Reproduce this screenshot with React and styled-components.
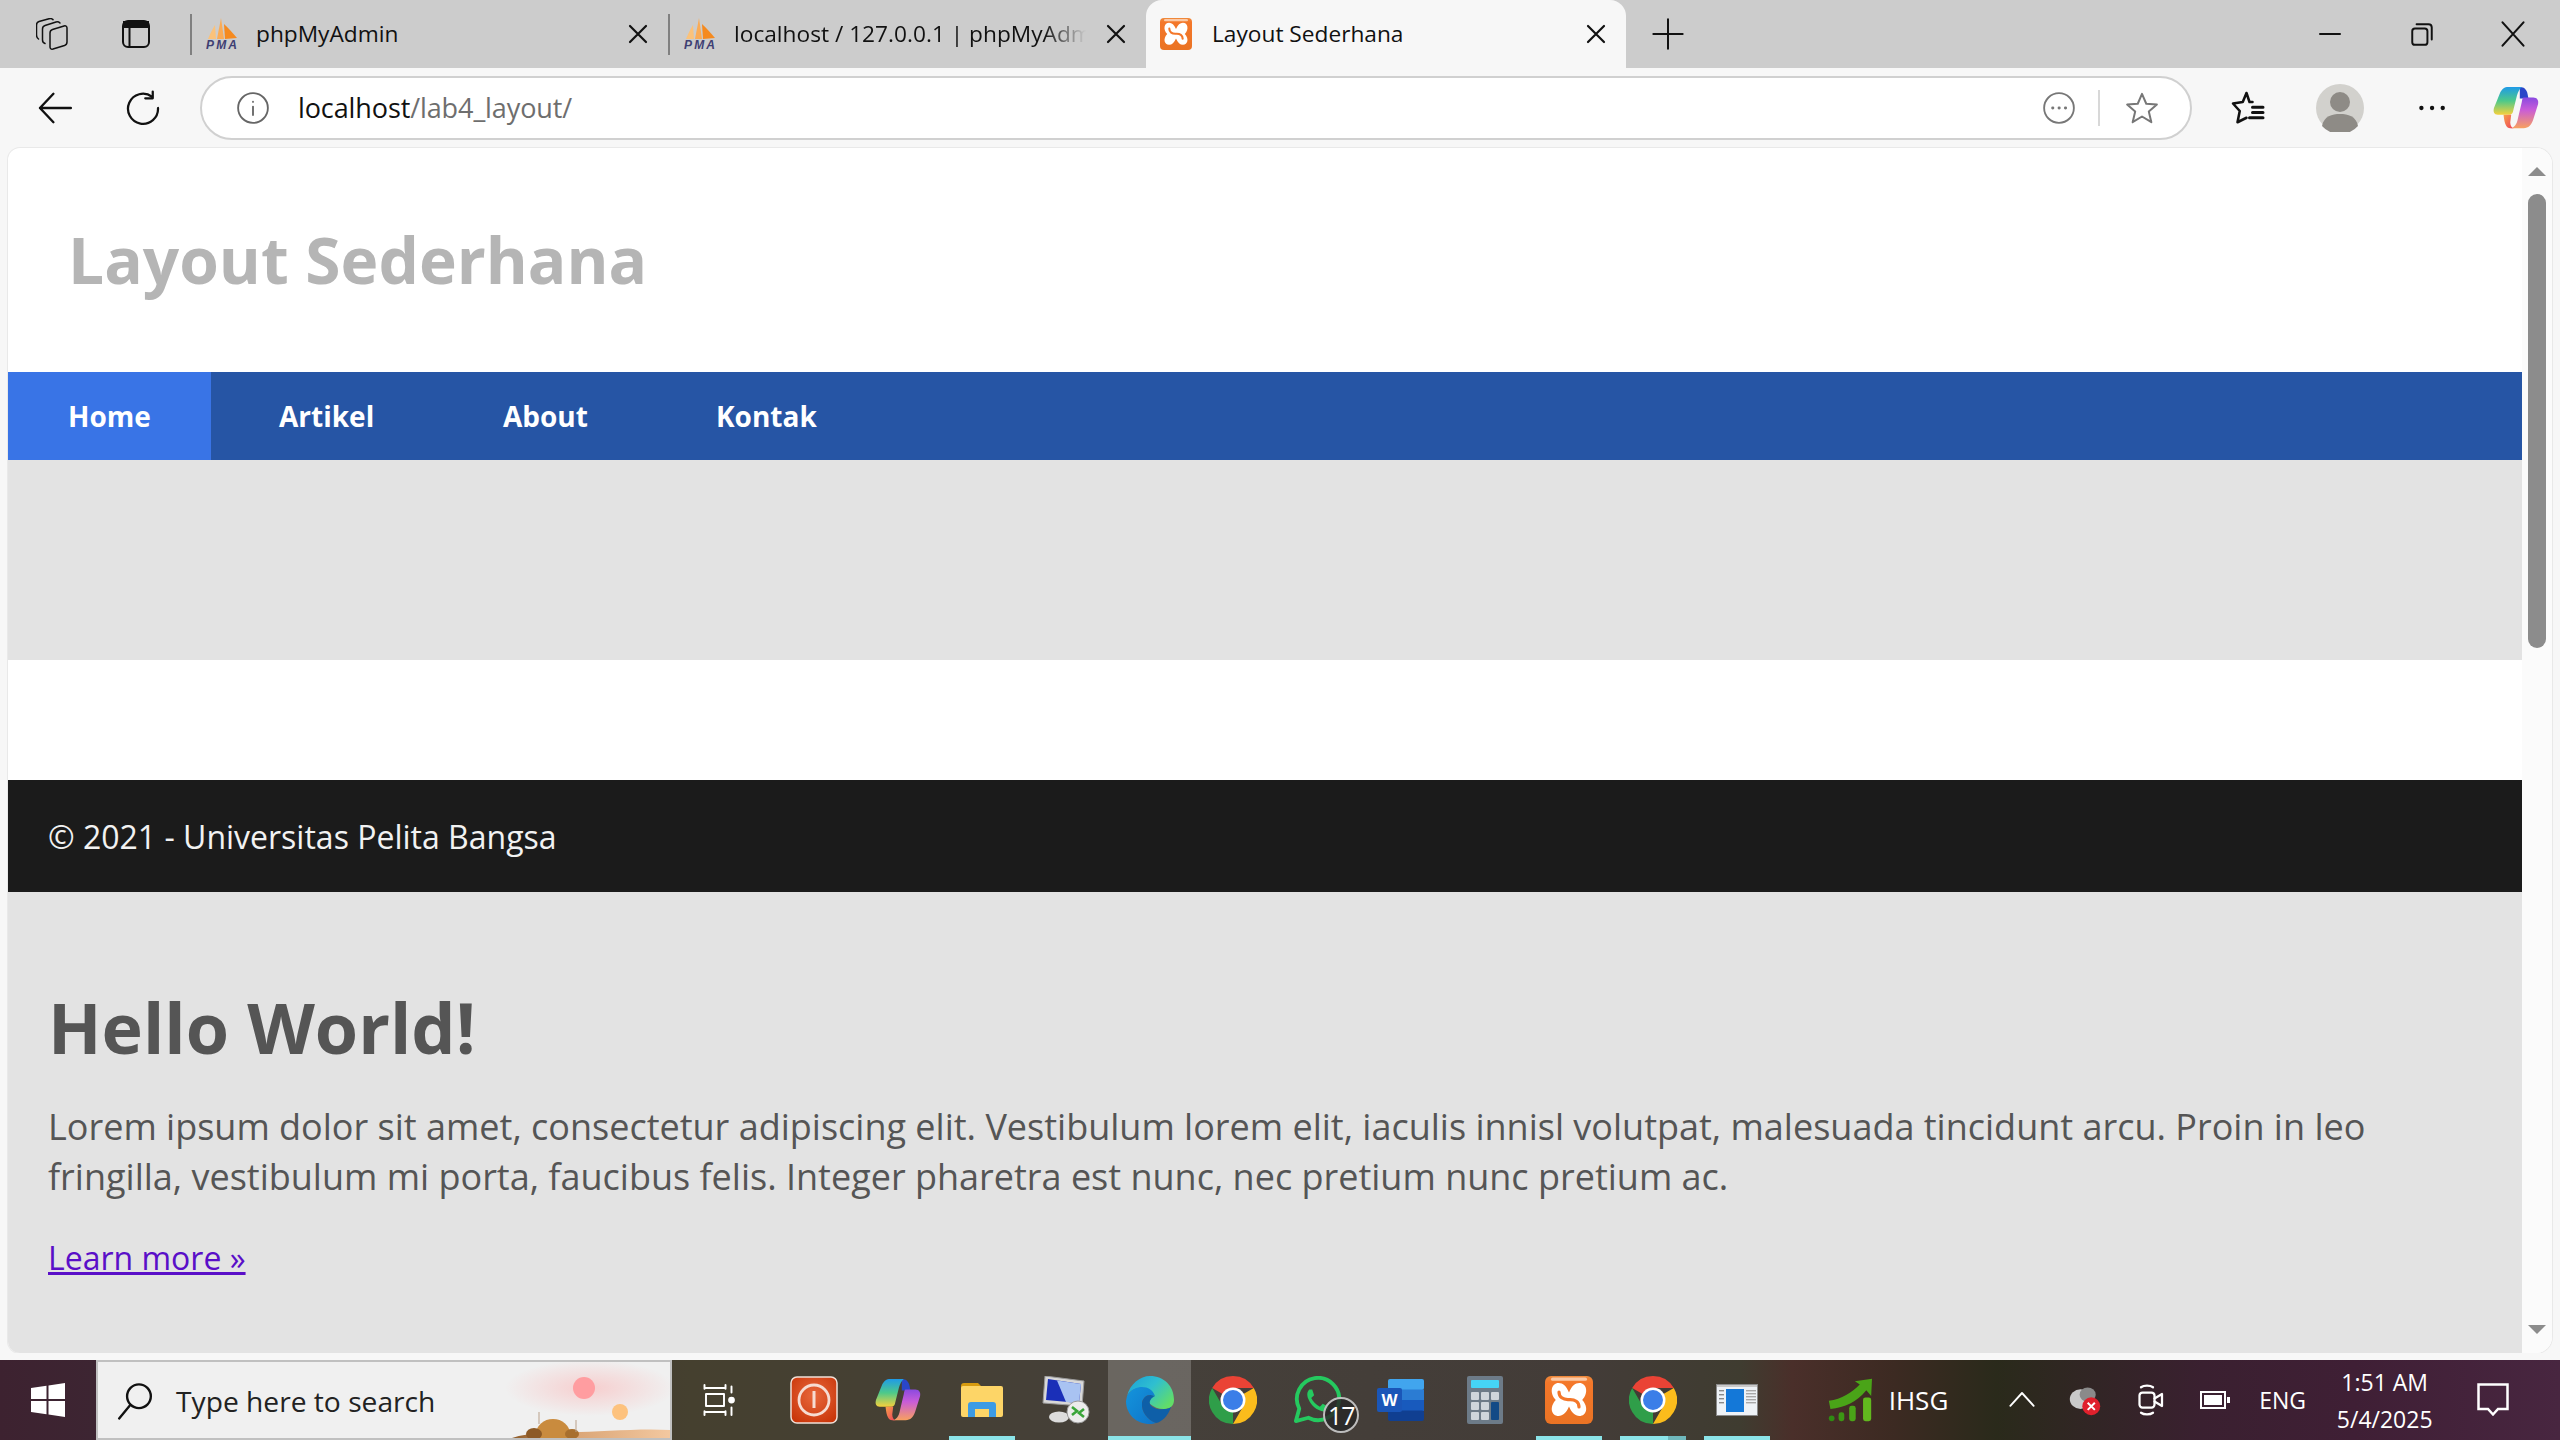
import React from 'react'
import styled, { createGlobalStyle } from 'styled-components'

const Global = createGlobalStyle`
  html, body { margin: 0; padding: 0; background: #f7f7f7; overflow: hidden; }
  * { box-sizing: border-box; }
`

const Screen = styled.div`
  width: 2560px;
  height: 1440px;
  display: flex;
  flex-direction: column;
  overflow: hidden;
  font-family: "Open Sans", "Noto Sans", sans-serif;
  background: #f7f7f7;
`

/* browser chrome */
const TabStrip = styled.div`
  height: 68px;
  flex: none;
  display: flex;
  background: #cccccc;
  color: #111;
`
const StripButton = styled.div`
  width: ${p => p.$w || 84}px;
  height: 68px;
  flex: none;
  display: flex;
  align-items: center;
  justify-content: center;
  margin-right: ${p => p.$mr || 0}px;
`
const Tab = styled.div`
  width: ${p => (p.$active ? 480 : 478)}px;
  height: 68px;
  flex: none;
  display: flex;
  align-items: center;
  gap: ${p => (p.$active ? 20 : 18)}px;
  padding: 0 18px 0 14px;
  font-size: 22.7px;
  border-left: ${p => (p.$active ? 'none' : '2px solid #808080')};
  border-image: ${p => (p.$active ? 'none' : 'linear-gradient(#ccc 22%, #808080 22%, #808080 80%, #ccc 80%) 1')};
  background: ${p => (p.$active ? '#f7f7f7' : 'transparent')};
  border-radius: ${p => (p.$active ? '16px 16px 0 0' : '0')};
`
const TabTitle = styled.span`
  flex: 1;
  min-width: 0;
  white-space: nowrap;
  overflow: hidden;
  padding-bottom: 1px;
  mask-image: ${p => (p.$fade ? 'linear-gradient(90deg, #000 88%, transparent)' : 'none')};
`
const WindowButtons = styled.div`
  margin-left: auto;
  display: flex;
  padding-right: 2px;
`
const Toolbar = styled.div`
  height: 80px;
  flex: none;
  display: flex;
  align-items: center;
  background: #f7f7f7;
  padding-left: 11px;
`
const ToolButton = styled.div`
  width: ${p => p.$w || 88}px;
  height: 64px;
  flex: none;
  display: flex;
  align-items: center;
  justify-content: center;
`
const AddressBar = styled.div`
  width: 1992px;
  height: 64px;
  flex: none;
  margin-left: 13px;
  display: flex;
  align-items: center;
  background: #fff;
  border: 2px solid #d0d0d0;
  border-radius: 32px;
  padding-left: 34px;
  margin-right: 14px;
`
const Url = styled.div`
  margin-left: 28px;
  flex: 1;
  font-size: 27px;
  color: #111;
  letter-spacing: -0.1px;
  padding-bottom: 2px;
`
const UrlPath = styled.span`
  color: #6e6e6e;
`
const AddressDivider = styled.div`
  width: 2px;
  height: 36px;
  background: #d8d8d8;
  margin: 0 25px 0 22px;
`

/* page viewport */
const Viewport = styled.div`
  margin: 0 8px;
  height: 1205px;
  flex: none;
  display: flex;
  background: #fff;
  border-radius: 12px 16px 16px 12px;
  overflow: hidden;
  box-shadow: 0 0 0 1px #e9e9e9;
`
const PageColumn = styled.div`
  width: 2514px;
  flex: none;
  display: flex;
  flex-direction: column;
`
const Header = styled.header`
  height: 224px;
  flex: none;
  padding: 0 60px;
  display: flex;
  align-items: center;
`
const SiteTitle = styled.h1`
  margin: 0;
  font-size: 64px;
  font-weight: 700;
  color: #b5b5b5;
  line-height: 1;
`
const Nav = styled.nav`
  height: 88px;
  flex: none;
  display: flex;
  gap: 8px;
  background: #2655a5;
`
const NavLink = styled.a`
  width: ${p => p.$w}px;
  padding-left: 60px;
  display: flex;
  align-items: center;
  color: #fff;
  font-size: 28px;
  font-weight: 700;
  background: ${p => (p.$active ? '#3974e6' : 'transparent')};
`
const Banner = styled.div`
  height: 200px;
  flex: none;
  background: #e3e3e3;
`
const Spacer = styled.div`
  height: 120px;
  flex: none;
`
const Footer = styled.footer`
  height: 112px;
  flex: none;
  display: flex;
  align-items: center;
  padding: 0 40px;
  background: #1b1b1b;
  color: #f2f2f2;
  font-size: 32px;
`
const Hero = styled.section`
  flex: 1;
  background: #e3e3e3;
  padding: 89px 40px 0;
  color: #555;
`
const HeroTitle = styled.h2`
  margin: 0 0 29px;
  font-size: 70px;
  font-weight: 700;
  line-height: 92px;
  color: #555;
`
const HeroText = styled.p`
  margin: 0 0 31px;
  font-size: 36px;
  line-height: 50px;
`
const LearnMore = styled.a`
  font-size: 32px;
  line-height: 50px;
  color: #5a0fc8;
  text-decoration: underline;
`
const ScrollTrack = styled.div`
  flex: 1;
  background: #fbfbfb;
  display: flex;
  flex-direction: column;
  align-items: center;
  padding-top: 19px;
`
const ArrowUp = styled.div`
  width: 0;
  height: 0;
  border-left: 9px solid transparent;
  border-right: 9px solid transparent;
  border-bottom: 9px solid #8c8c8c;
`
const ArrowDown = styled(ArrowUp)`
  border-bottom: none;
  border-top: 9px solid #8c8c8c;
  margin-top: auto;
  margin-bottom: 19px;
`
const Thumb = styled.div`
  width: 18px;
  height: 454px;
  margin-top: 18px;
  background: #8c8c8c;
  border-radius: 9px;
`
const BottomGap = styled.div`
  height: 7px;
  flex: none;
  background: #f7f7f7;
`

/* taskbar */
const Taskbar = styled.div`
  height: 80px;
  flex: none;
  display: flex;
  align-items: stretch;
  color: #fff;
  background: linear-gradient(90deg, #3d2230 0%, #3d2532 3.7%, #45402f 27%, #45403a 45%, #433c38 62%, #3f3c30 68%, #4a2f2a 70%, #3c2a22 74%, #2a2a1b 78%, #3a2030 86%, #3f1f35 92%, #482640 100%);
`
const StartButton = styled.div`
  width: 96px;
  flex: none;
  display: flex;
  align-items: center;
  justify-content: center;
`
const SearchBox = styled.div`
  width: 576px;
  flex: none;
  display: flex;
  align-items: center;
  gap: 22px;
  padding: 2px 0 0 18px;
  background: #f0f0f0;
  border: 2px solid #c0c0c0;
  color: #222;
  font-size: 28.2px;
  position: relative;
  overflow: hidden;
`
const SearchArt = styled.svg`
  position: absolute;
  right: 0;
  top: 0;
`
const TaskSlot = styled.div`
  width: ${p => p.$w || 83.9}px;
  flex: none;
  display: flex;
  align-items: center;
  justify-content: center;
  position: relative;
  background: ${p => (p.$active ? 'rgba(255,255,255,.2)' : 'transparent')};
  &::after {
    content: '';
    display: ${p => (p.$open ? 'block' : 'none')};
    position: absolute;
    bottom: 0;
    left: ${p => (p.$active ? 0 : '9px')};
    right: ${p => (p.$active ? 0 : '9px')};
    height: 4px;
    background: ${p => (p.$stacked ? 'linear-gradient(90deg, #8be4e8 73%, #6fb8bc 73%)' : '#8be4e8')};
  }
`
const TaskView = styled(TaskSlot)`
  padding-right: 8px;
`
const CountBadge = styled.span`
  position: absolute;
  right: 0;
  bottom: 7px;
  width: 36px;
  height: 36px;
  border-radius: 50%;
  border: 2px solid #bdbdbd;
  background: rgba(40, 40, 40, .85);
  display: flex;
  align-items: center;
  justify-content: center;
  font-size: 25px;
  letter-spacing: -1px;
`
const Ticker = styled.div`
  margin-left: 48px;
  width: 163px;
  flex: none;
  display: flex;
  align-items: center;
  gap: 16px;
  font-size: 26px;
`
const Tray = styled.div`
  flex: 1;
  display: flex;
  align-items: center;
  font-size: 23px;
`
const TrayIcon = styled.div`
  width: ${p => p.$w || 62}px;
  flex: none;
  display: flex;
  align-items: center;
  justify-content: center;
`
const Clock = styled.div`
  width: 130px;
  flex: none;
  display: flex;
  flex-direction: column;
  align-items: center;
  gap: 7px;
  font-size: 23px;
  line-height: 30px;
`

/* drawings */
const Line = ({ w = 32, vb = 24, sw = 1.6, stroke = '#111', children }) => (
  <svg width={w} height={w} viewBox={`0 0 ${vb} ${vb}`} fill="none" stroke={stroke} strokeWidth={sw} strokeLinecap="round" strokeLinejoin="round" style={{ flex: 'none' }}>
    {children}
  </svg>
)

const PmaIcon = () => (
  <svg width="32" height="32" viewBox="0 0 32 32" style={{ flex: 'none' }}>
    <path d="M2 21 C5 14 7 10 9 7 L10 21Z" fill="#fbc27a" />
    <path d="M11 21 L15 0 L18 21Z" fill="#fbab55" />
    <path d="M19 21 L18 6 C23 11 27 15 31 20Z" fill="#f58a1f" />
    <text x="0" y="31" fontSize="12" fontWeight="700" fontStyle="italic" fill="#3f3f73" fontFamily="Liberation Sans" textLength="31">PMA</text>
  </svg>
)

const XamppMark = ({ s = 32, id }) => (
  <svg width={s} height={s} viewBox="0 0 24 24" style={{ flex: 'none' }}>
    <defs>
      <linearGradient id={id} x1="0" y1="0" x2="0" y2="1">
        <stop offset="0" stopColor="#ef8a3c" />
        <stop offset="0.14" stopColor="#f4772a" />
        <stop offset="1" stopColor="#ea7324" />
      </linearGradient>
    </defs>
    <rect width="24" height="24" rx="3" fill={`url(#${id})`} />
    <rect x="3" y="0.8" width="18" height="1.6" rx="0.8" fill="#fbc9a6" />
    <path d="M12 8.2 C10.6 5 9 3.5 6.8 3.5 C3.2 3.5 2 8.4 5.4 12 C2 15.6 3.2 20 6.8 20 C9 20 10.6 18.5 12 15.3 C13.4 18.5 15 20 17.2 20 C20.8 20 22 15.6 18.6 12 C22 8.4 20.8 3.5 17.2 3.5 C15 3.5 13.4 5 12 8.2Z" fill="#fff" />
    <path d="M7 8 C7 10.5 9 12 12 11.8 C15 11.6 17 13 17 15.5" fill="none" stroke="#f4772a" strokeWidth="1.6" strokeLinecap="round" />
  </svg>
)

const ChromeIcon = () => (
  <svg width="48" height="48" viewBox="0 0 48 48">
    <path d="M24 0 A24 24 0 0 1 44.8 12 L24 12 A12 12 0 0 0 13.6 18 L3.2 12 A24 24 0 0 1 24 0Z" fill="#ea4335" />
    <path d="M44.8 12 A24 24 0 0 1 24 48 L34.4 30 A12 12 0 0 0 34.4 18 Z" fill="#fbbc1c" />
    <path d="M3.2 12 L13.6 30 A12 12 0 0 0 24 36 L24 48 A24 24 0 0 1 3.2 12Z" fill="#2f9e49" />
    <circle cx="24" cy="24" r="12.5" fill="#fff" />
    <circle cx="24" cy="24" r="10" fill="#3b7ee8" />
  </svg>
)

const EdgeIcon = () => (
  <svg width="48" height="48" viewBox="0 0 48 48">
    <defs>
      <linearGradient id="edgeTop" x1="0" y1="0" x2="1" y2="0.7">
        <stop offset="0" stopColor="#1a9fd8" />
        <stop offset="0.5" stopColor="#2fbfd0" />
        <stop offset="1" stopColor="#62dd68" />
      </linearGradient>
      <linearGradient id="edgeMid" x1="0" y1="0" x2="1" y2="1">
        <stop offset="0" stopColor="#1494dc" />
        <stop offset="1" stopColor="#0f74c8" />
      </linearGradient>
    </defs>
    <path d="M1 20 C4 8 14 0 24 0 C38 0 48 10 48 24 C48 30 44 33 38 33 C32 33 28 31 24 28 C22 26 24 24 26 21 C24 16 20 12 14 12 C8 12 3 16 1 20Z" fill="url(#edgeTop)" />
    <path d="M1 20 C5 13 11 11 16 11 C22 11 27 14 29 20 C22 17 17 21 16 27 C15 36 22 44 30 47 C27.5 47.8 26 48 24 48 C10 48 0 38 0 25Z" fill="url(#edgeMid)" />
    <path d="M16 27 C17 21 22 17 29 20 C25 22 23 25 24 28 C26 32 32 34 38 33 C41 33 43 32.5 45 31 C42 40 36 46 30 47 C22 44 15 36 16 27Z" fill="#0e5fa8" />
  </svg>
)

const CopilotIcon = ({ s = 46, id }) => (
  <svg width={s} height={s} viewBox="0 0 48 46">
    <defs>
      <linearGradient id={`${id}a`} x1="0" y1="0" x2="0" y2="1">
        <stop offset="0" stopColor="#1e9ae8" />
        <stop offset="0.5" stopColor="#4dc98a" />
        <stop offset="1" stopColor="#f5d13c" />
      </linearGradient>
      <linearGradient id={`${id}b`} x1="0" y1="0" x2="0" y2="1">
        <stop offset="0" stopColor="#8a4ae0" />
        <stop offset="0.4" stopColor="#c85cd8" />
        <stop offset="1" stopColor="#f8a060" />
      </linearGradient>
      <linearGradient id={`${id}c`} x1="0" y1="0" x2="1" y2="1">
        <stop offset="0" stopColor="#f7a04a" />
        <stop offset="1" stopColor="#ee3f5a" />
      </linearGradient>
    </defs>
    <path d="M28 1 C33 1 35 4 36 8 L37 13 H28Z" fill="#2a46c8" />
    <path d="M16 1 H30 C28 3 26 6 25 10 L21 26 C20.5 29 19 30 15 30 H5 C1 30 0 27 1 23 L7 8 C9 3 12 1 16 1Z" fill={`url(#${id}a)`} />
    <path d="M32 12 H42 C46 12 48 15 47 19 L42 35 C40 41 37 44 32 44 H18 C22 44 25 40 26 34 L30 17 C30.5 14 31 12 32 12Z" fill={`url(#${id}b)`} />
    <path d="M11 30 H19 L18 38 C18 42 20 44 22 44 H18 C14 44 12 40 11 30Z" fill={`url(#${id}c)`} />
  </svg>
)

const PowerApp = () => (
  <svg width="48" height="48" viewBox="0 0 48 48">
    <defs>
      <radialGradient id="powerFill" cx="0.5" cy="0.4" r="0.7">
        <stop offset="0" stopColor="#e8683c" />
        <stop offset="1" stopColor="#c83408" />
      </radialGradient>
    </defs>
    <rect x="1" y="1" width="46" height="46" rx="6" fill="url(#powerFill)" stroke="#f0e0d8" strokeWidth="1.5" />
    <circle cx="24" cy="24" r="15" fill="none" stroke="#f6dcd2" strokeWidth="2.8" />
    <rect x="22.5" y="15" width="3" height="17" fill="#f6dcd2" />
  </svg>
)

const FolderIcon = () => (
  <svg width="42" height="36" viewBox="0 0 42 36">
    <path d="M0 4 a3 3 0 0 1 3-3 h14 l4 4 v3 h-21Z" fill="#d69a0f" />
    <rect x="0" y="4" width="42" height="31" rx="2" fill="#fdd567" />
    <path d="M7 35 V23 a3 3 0 0 1 3-3 h22 a3 3 0 0 1 3 3 V35 h-7 V27 h-14 V35Z" fill="#3c9be4" />
  </svg>
)

const RemoteIcon = () => (
  <svg width="48" height="48" viewBox="0 0 48 48">
    <path d="M3 0 L42 5 L40 30 L1 27Z" fill="#d8d8d8" stroke="#9a9a9a" />
    <path d="M6 3 L39 8 L37 27 L4 24Z" fill="#1a2fb8" />
    <path d="M15 4.5 L39 8 L37 27 L24 26Z" fill="#a9c3f2" />
    <ellipse cx="17" cy="41" rx="10" ry="5.5" fill="#dcdcdc" />
    <circle cx="36" cy="36" r="11" fill="#ececec" stroke="#999" />
    <path d="M30 31 l5 4 -5 4 M42 33 l-5 4 5 4" stroke="#3aa53a" strokeWidth="2.6" fill="none" />
  </svg>
)

const WhatsappIcon = () => (
  <svg width="48" height="48" viewBox="0 0 50 50">
    <path d="M3 47 L6.5 34 A22 22 0 1 1 16 43.5Z" fill="none" stroke="#25c95f" strokeWidth="4" strokeLinejoin="round" />
    <path d="M17 14 C15 16 14 19 16 24 C19 31 25 36 32 37 C35 37 37 35 37 32 L31 29 L28 32 C24 30 21 27 19 23 L22 20 L20 14Z" fill="#25c95f" />
  </svg>
)

const WordIcon = () => (
  <svg width="48" height="42" viewBox="0 0 48 42">
    <rect x="11" y="0" width="36" height="11" rx="2" fill="#41a5ee" />
    <rect x="11" y="10.5" width="36" height="11" fill="#2b7cd3" />
    <rect x="11" y="21" width="36" height="11" fill="#185abd" />
    <rect x="11" y="31.5" width="36" height="10.5" rx="2" fill="#103f91" />
    <rect x="0" y="9" width="25" height="24" rx="2" fill="#1a56b8" />
    <text x="12.5" y="27" fontSize="17" fontWeight="700" fill="#fff" textAnchor="middle" fontFamily="Liberation Sans">W</text>
  </svg>
)

const CalcIcon = () => (
  <svg width="36" height="48" viewBox="0 0 36 48">
    <rect width="36" height="48" rx="2" fill="#6d7b88" />
    <rect x="4" y="4" width="28" height="8" rx="1" fill="#45d4f5" />
    {[0, 1, 2].map(r => [0, 1, 2].map(c => (
      (r === 0 || c < 2) && <rect key={`${r}${c}`} x={4 + c * 10} y={16 + r * 10} width="8" height="8" rx="1" fill="#cfd6dc" />
    )))}
    <rect x="24" y="26" width="8" height="18" rx="1" fill="#134a86" />
  </svg>
)

const WindowApp = () => (
  <svg width="42" height="32" viewBox="0 0 42 32">
    <rect x="0.5" y="0.5" width="41" height="31" fill="#eef2f6" stroke="#8a8a8a" />
    <rect x="1" y="1" width="40" height="2" fill="#c8c8c8" />
    {[6, 10, 14, 18].map(y => <rect key={y} x="3" y={y} width="5" height="1.4" fill="#8a8a8a" />)}
    <rect x="10" y="5" width="18" height="23" fill="#1478d8" />
    {[6, 9, 12, 15, 18].map(y => <rect key={y} x="30" y={y} width="10" height="1.4" fill="#a8a8a8" />)}
  </svg>
)

const StockIcon = () => (
  <svg width="46" height="44" viewBox="0 0 56 54">
    <path d="M2 28 C18 26 30 18 40 8 L34 4 L55 1 L54 22 L48 15 C36 30 22 36 4 38Z" fill="#4aa418" />
    <rect x="2" y="46" width="7" height="7" rx="3.5" fill="#2f8a12" />
    <rect x="14" y="42" width="7" height="11" rx="3" fill="#3c9614" />
    <rect x="27" y="34" width="8" height="19" rx="3" fill="#4aa418" />
    <rect x="44" y="24" width="10" height="29" rx="3" fill="#62b81e" />
  </svg>
)

const SearchArtwork = () => (
  <SearchArt width="180" height="76" viewBox="0 0 180 76">
    <defs>
      <radialGradient id="glow">
        <stop offset="0" stopColor="#f9c0c0" stopOpacity=".7" />
        <stop offset="1" stopColor="#f9c0c0" stopOpacity="0" />
      </radialGradient>
      <linearGradient id="sand" x1="0" y1="0" x2="1" y2="0">
        <stop offset="0" stopColor="#8d5a26" />
        <stop offset="0.35" stopColor="#d8a272" />
        <stop offset="1" stopColor="#f3c8a0" />
      </linearGradient>
    </defs>
    <ellipse cx="100" cy="26" rx="85" ry="28" fill="url(#glow)" />
    <circle cx="94" cy="26" r="11" fill="#ff9da0" />
    <circle cx="130" cy="50" r="8" fill="#fdc27e" />
    <path d="M22 76 C40 70 60 72 80 70 C110 70 150 66 180 68 V76Z" fill="url(#sand)" />
    <ellipse cx="63" cy="72" rx="17" ry="15" fill="#c98b3e" />
    <ellipse cx="44" cy="72" rx="8" ry="6" fill="#8d5a26" />
    <ellipse cx="82" cy="72" rx="7" ry="5" fill="#a86f2e" />
    <path d="M49 50 V62 M86 58 V70" stroke="#b9a08a" strokeWidth="1" />
  </SearchArt>
)

const CloseX = () => (
  <Line w={24} sw={2.2}><path d="M4 4 L20 20 M20 4 L4 20" /></Line>
)

const App = () => (
  <Screen>
    <Global />
    <TabStrip>
      <StripButton $w={104}>
        <Line w={32} vb={32} sw={1.5}>
          <path d="M16.5 11.5 L28 8 C30 7.5 31 8.5 31 10 V24 C31 26 30 27 28.5 27.5 L17 31 C15 31.5 14 30.5 14 29 V15 C14 13 15 12 16.5 11.5Z" />
          <path d="M9 25.5 C7.5 25 6.5 24 6.5 22 V11 C6.5 9 7.5 8 9 7.5 L20 4 C21.5 3.6 23 4 24 5" />
          <path d="M2.5 21 C1 20 0.5 19 0.5 17 V7 C0.5 5 1.5 4 3 3.5 L13 0.8 C14.5 0.4 16 0.6 17 1.6" />
        </Line>
      </StripButton>
      <StripButton $w={64} $mr={22}>
        <svg width="28" height="28" viewBox="0 0 28 28" fill="none" stroke="#111" strokeWidth="2">
          <rect x="1" y="1" width="26" height="26" rx="5" />
          <path d="M2 2 H26 V7 H2Z" fill="#111" />
          <path d="M7.5 7 V26" />
        </svg>
      </StripButton>
      <Tab>
        <PmaIcon />
        <TabTitle>phpMyAdmin</TabTitle>
        <CloseX />
      </Tab>
      <Tab>
        <PmaIcon />
        <TabTitle $fade>localhost / 127.0.0.1 | phpMyAdmin</TabTitle>
        <CloseX />
      </Tab>
      <Tab $active>
        <XamppMark id="favX" />
        <TabTitle>Layout Sederhana</TabTitle>
        <CloseX />
      </Tab>
      <StripButton $w={84}>
        <Line w={32} sw={1.5}><path d="M12 1 V23 M1 12 H23" /></Line>
      </StripButton>
      <WindowButtons>
        <StripButton $w={92}><Line w={24} sw={2}><path d="M2 12 H22" /></Line></StripButton>
        <StripButton $w={92}>
          <Line w={26} sw={1.8}>
            <rect x="3" y="7" width="14" height="15" rx="2.5" />
            <path d="M7 3 H18 C20 3 21 4 21 6 V17" />
          </Line>
        </StripButton>
        <StripButton $w={90}><Line w={28} sw={1.8}><path d="M3 2 L21 22 M21 2 L3 22" /></Line></StripButton>
      </WindowButtons>
    </TabStrip>

    <Toolbar>
      <ToolButton>
        <Line w={38} sw={1.5}><path d="M22 12 H2.5 M11 3 L2.5 12 L11 21" /></Line>
      </ToolButton>
      <ToolButton>
        <Line w={36} sw={1.5}>
          <path d="M18 4.5 A10 10 0 1 0 22 12" />
          <path d="M18.5 1 V5.5 H13.5" />
        </Line>
      </ToolButton>
      <AddressBar>
        <Line w={34} sw={1.3} stroke="#666">
          <circle cx="12" cy="12" r="10.5" />
          <path d="M12 11 V17 M12 7.5 V7.7" />
        </Line>
        <Url>localhost<UrlPath>/lab4_layout/</UrlPath></Url>
        <Line w={34} sw={1.3} stroke="#777">
          <circle cx="12" cy="12" r="10.5" />
          <path d="M7.5 12 H7.7 M12 12 H12.2 M16.5 12 H16.7" strokeWidth="2" />
        </Line>
        <AddressDivider />
        <Line w={34} sw={1.4} stroke="#777">
          <path d="M12 2 L15 9 L22.5 9.6 L16.8 14.5 L18.6 22 L12 18 L5.4 22 L7.2 14.5 L1.5 9.6 L9 9Z" />
        </Line>
        <ToolButton $w={31} />
      </AddressBar>
      <ToolButton $w={84}>
        <Line w={36} sw={1.7}>
          <path d="M11 2 L13 8 H15 M8.5 8 L2 9 L6.5 14 L5 21.5 L11 18.5 M11 2 L8.5 8" />
          <path d="M15 11.5 H22 M15 15 H22 M13 18.5 H22" strokeWidth="2" />
        </Line>
      </ToolButton>
      <ToolButton $w={100}>
        <svg width="48" height="48" viewBox="0 0 48 48">
          <circle cx="24" cy="24" r="24" fill="#d2d1cd" />
          <circle cx="24" cy="18" r="10" fill="#8e8b86" />
          <path d="M6 42 C8 32 16 30 24 30 C32 30 40 32 42 42 A24 24 0 0 1 6 42Z" fill="#8e8b86" />
        </svg>
      </ToolButton>
      <ToolButton $w={84}>
        <Line w={32} sw={3.2}>
          <path d="M4 12 H4.1 M12 12 H12.1 M20 12 H20.1" />
        </Line>
      </ToolButton>
      <ToolButton $w={84}>
        <CopilotIcon id="top" />
      </ToolButton>
    </Toolbar>

    <Viewport>
      <PageColumn>
        <Header>
          <SiteTitle>Layout Sederhana</SiteTitle>
        </Header>
        <Nav>
          <NavLink $active $w={203}>Home</NavLink>
          <NavLink $w={216}>Artikel</NavLink>
          <NavLink $w={205}>About</NavLink>
          <NavLink $w={220}>Kontak</NavLink>
        </Nav>
        <Banner />
        <Spacer />
        <Footer>© 2021 - Universitas Pelita Bangsa</Footer>
        <Hero>
          <HeroTitle>Hello World!</HeroTitle>
          <HeroText>
            Lorem ipsum dolor sit amet, consectetur adipiscing elit. Vestibulum lorem elit, iaculis innisl volutpat, malesuada tincidunt arcu. Proin in leo fringilla, vestibulum mi porta, faucibus felis. Integer pharetra est nunc, nec pretium nunc pretium ac.
          </HeroText>
          <LearnMore>Learn more »</LearnMore>
        </Hero>
      </PageColumn>
      <ScrollTrack>
        <ArrowUp />
        <Thumb />
        <ArrowDown />
      </ScrollTrack>
    </Viewport>
    <BottomGap />

    <Taskbar>
      <StartButton>
        <svg width="34" height="34" viewBox="0 0 34 34" fill="#fff">
          <path d="M0 5 L15.5 2.8 V16 H0Z M17.5 2.5 L34 0 V16 H17.5Z M0 18 H15.5 V31.2 L0 29Z M17.5 18 H34 V34 L17.5 31.5Z" />
        </svg>
      </StartButton>
      <SearchBox>
        <Line w={38} sw={1.5} stroke="#111">
          <circle cx="14.5" cy="9" r="7.5" />
          <path d="M9 14.5 L2 23" />
        </Line>
        Type here to search
        <SearchArtwork />
      </SearchBox>
      <TaskView $w={100}>
        <Line w={36} sw={1.3} stroke="#fff">
          <path d="M3 4 H17 M3 20 H17 M3 4.5 V2 M17 4.5 V2 M3 19.5 V22 M17 19.5 V22 M21 3 V7 M21 17 V22" />
          <rect x="4" y="8" width="12" height="8" />
          <circle cx="21" cy="12" r="1.6" fill="#fff" />
        </Line>
      </TaskView>
      <TaskSlot><PowerApp /></TaskSlot>
      <TaskSlot><CopilotIcon id="bar" /></TaskSlot>
      <TaskSlot $open><FolderIcon /></TaskSlot>
      <TaskSlot><RemoteIcon /></TaskSlot>
      <TaskSlot $open $active><EdgeIcon /></TaskSlot>
      <TaskSlot><ChromeIcon /></TaskSlot>
      <TaskSlot><WhatsappIcon /><CountBadge>17</CountBadge></TaskSlot>
      <TaskSlot><WordIcon /></TaskSlot>
      <TaskSlot><CalcIcon /></TaskSlot>
      <TaskSlot $open><XamppMark s={48} id="barX" /></TaskSlot>
      <TaskSlot $open $stacked><ChromeIcon /></TaskSlot>
      <TaskSlot $open><WindowApp /></TaskSlot>
      <Ticker>
        <StockIcon />
        IHSG
      </Ticker>
      <Tray>
        <TrayIcon $w={64}><Line w={28} sw={1.6} stroke="#fff"><path d="M2 17 L12 6 L22 17" /></Line></TrayIcon>
        <TrayIcon $w={62}>
          <svg width="34" height="36" viewBox="0 0 38 38">
            <ellipse cx="14" cy="18" rx="12" ry="11" fill="#c9c9c9" />
            <ellipse cx="22" cy="13" rx="9" ry="8" fill="#8a8a8a" />
            <circle cx="26" cy="26" r="10" fill="#e0202c" />
            <path d="M22 22 L30 30 M30 22 L22 30" stroke="#fff" strokeWidth="2.2" />
          </svg>
        </TrayIcon>
        <TrayIcon $w={68}>
          <Line w={36} sw={1.5} stroke="#fff">
            <rect x="5" y="7" width="10" height="10" rx="2" />
            <path d="M15 11 L20 8 V16 L15 13 M6 3.5 C8 2 12 2 14 3.5 M6 20.5 C8 22 12 22 14 20.5" />
          </Line>
        </TrayIcon>
        <TrayIcon $w={62}>
          <svg width="30" height="18" viewBox="0 0 30 18">
            <rect x="1" y="1" width="24" height="16" fill="none" stroke="#fff" strokeWidth="2" />
            <rect x="4" y="4" width="18" height="10" fill="#fff" />
            <rect x="27" y="6" width="3" height="6" fill="#fff" />
          </svg>
        </TrayIcon>
        <TrayIcon $w={74}>ENG</TrayIcon>
        <Clock>
          <span>1:51 AM</span>
          <span>5/4/2025</span>
        </Clock>
        <TrayIcon $w={86}>
          <svg width="32" height="34" viewBox="0 0 32 34" fill="none" stroke="#fff" strokeWidth="2.5">
            <path d="M1.5 1.5 H30.5 V26 H21 L16 31.5 L11 26 H1.5Z" />
          </svg>
        </TrayIcon>
      </Tray>
    </Taskbar>
  </Screen>
)

export default App
